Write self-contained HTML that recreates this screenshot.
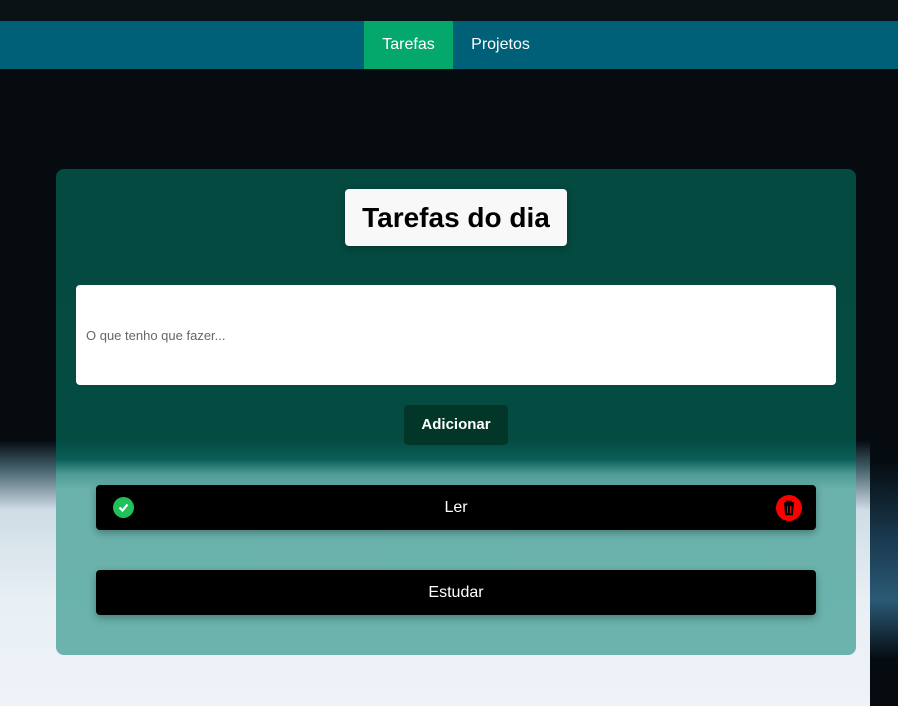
<!DOCTYPE html>
<html><head><meta charset="utf-8"><style>
*{margin:0;padding:0;box-sizing:border-box}
body{width:898px;height:706px;overflow:hidden;font-family:"Liberation Sans",sans-serif;position:relative;
background:linear-gradient(180deg,#050b0f 0,#050b0f 440px,#3a5560 465px,#cfdde6 510px,#e8eff5 600px,#eef3f8 706px);}
.right{position:absolute;left:870px;top:0;width:28px;height:706px;background:linear-gradient(180deg,#050b0f 0,#050b0f 460px,#1a3a50 540px,#2a5a76 600px,#050b0f 660px)}
.top{position:absolute;left:0;top:0;width:898px;height:21px;background:#0b1216}
nav{position:absolute;left:0;top:21px;width:898px;height:48px;background:#006078}
nav a{position:absolute;color:#fff;font-size:16px;line-height:48px;text-align:center;text-decoration:none}
nav a.act{background:#05a86c}
.card{position:absolute;left:56px;top:169px;width:800px;height:486px;border-radius:8px;
background:linear-gradient(180deg,#044a40 0,#044b41 270px,#0a5d58 290px,#4d9b94 305px,#6ab2ab 320px,#6bb3ac 486px)}
.title{position:absolute;left:289px;top:20px;width:222px;height:57px;background:#f8f8f8;border-radius:4px;font-weight:bold;font-size:28px;line-height:57px;text-align:center;color:#000;box-shadow:0 2px 8px rgba(0,0,0,.3)}
.inp{position:absolute;left:20px;top:116px;width:760px;height:100px;background:#fff;border-radius:4px;font-size:13px;color:#666;padding:43px 10px}
.btn{position:absolute;left:348px;top:236px;width:104px;height:40px;background:#023629;border-radius:4px;color:#fff;font-weight:bold;font-size:15px;line-height:40px;text-align:center}
.item{position:absolute;left:40px;width:720px;height:45px;background:#000;border-radius:4px;color:#fff;font-size:16px;line-height:45px;text-align:center;box-shadow:0 3px 8px rgba(0,0,0,.3)}
.chk{position:absolute;left:17px;top:12px;width:21px;height:21px;border-radius:50%;background:#22c05a}
.del{position:absolute;right:14px;top:10px;width:26px;height:26px;border-radius:50%;background:#f00}
</style></head><body>
<div class="right"></div>
<div class="top"></div>
<nav><a class="act" style="left:364px;width:89px">Tarefas</a><a style="left:453px;width:95px">Projetos</a></nav>
<div class="card">
<div class="title">Tarefas do dia</div>
<div class="inp">O que tenho que fazer...</div>
<div class="btn">Adicionar</div>
<div class="item" style="top:316px">Ler
<span class="chk"><svg width="21" height="21" viewBox="0 0 21 21" style="position:absolute;left:0;top:0"><path d="M6.5 10.5l3 3 5-6" stroke="#fff" stroke-width="2.2" fill="none"/></svg></span>
<span class="del"><svg width="26" height="26" viewBox="0 0 26 26" style="position:absolute;left:0;top:0"><path d="M8 8h10M11 8V6.5h4V8M9 9.5h8l-.8 10h-6.4z" stroke="#000" stroke-width="1.6" fill="#000"/><path d="M11.5 11v7M14.5 11v7" stroke="#f00" stroke-width="1"/></svg></span></div>
<div class="item" style="top:401px">Estudar</div>
</div>
</body></html>
